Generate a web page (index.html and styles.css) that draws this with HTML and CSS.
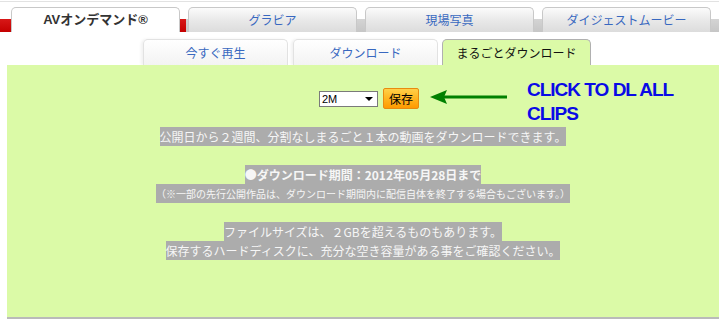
FILE: index.html
```html
<!DOCTYPE html>
<html lang="ja">
<head>
  <meta charset="UTF-8">
  <title>まるごとダウンロード</title>
  <link rel="stylesheet" href="styles.css">
</head>
<body>

<div class="topline"></div>

<div class="maintabs">
  <div class="mtab active">AVオンデマンド®</div>
  <div class="mtab">グラビア</div>
  <div class="mtab">現場写真</div>
  <div class="mtab">ダイジェストムービー</div>
</div>

<div class="subtabs">
  <div class="stab">今すぐ再生</div>
  <div class="stab">ダウンロード</div>
  <div class="stab active">まるごとダウンロード</div>
</div>

<div class="panel">
  <div class="controls">
    <div class="select">
      <span>2M</span>
      <span class="caret"></span>
    </div>
    <button class="save">保存</button>
  </div>

  <div class="note">
    <svg class="arrow" width="80" height="16" viewBox="0 0 80 16">
      <path d="M14 8 H77" stroke="#008000" stroke-width="3"/>
      <path d="M0 8 L17 1 L14 8 L17 15 Z" fill="#008000"/>
    </svg>
    <div class="note-text">CLICK TO DL ALL<br>CLIPS</div>
  </div>

  <div class="info">
    <div class="line"><span>公開日から２週間、分割なしまるごと１本の動画をダウンロードできます。</span></div>
    <div class="line"></div>
    <div class="line"><span class="bold">●ダウンロード期間：2012年05月28日まで</span></div>
    <div class="line"><span class="small">（※一部の先行公開作品は、ダウンロード期間内に配信自体を終了する場合もございます。）</span></div>
    <div class="line"></div>
    <div class="line"><span>ファイルサイズは、２GBを超えるものもあります。</span></div>
    <div class="line"><span>保存するハードディスクに、充分な空き容量がある事をご確認ください。</span></div>
  </div>
</div>

</body>
</html>
```

FILE: styles.css
```css
* {
  box-sizing: border-box;
}
body {
  margin: 0;
  background: #fff;
  font-family: "Noto Sans CJK JP", "DejaVu Sans", sans-serif;
  font-size: 12px;
}
.topline {
  margin-top: 1px;
  height: 1px;
  background: #e2e2e2;
}

/* main tabs */
.maintabs {
  display: flex;
  gap: 8px;
  padding: 5px 0 0 11px;
  height: 30px;
  background:
    linear-gradient(#d81818, #c40000) 0 100% / 186px 13px no-repeat,
    linear-gradient(#d4d4d4, #c6c6c6) 0 100% / 100% 13px no-repeat;
  border-top-left-radius: 8px;
}
.mtab {
  width: 169px;
  height: 25px;
  border: 1px solid #c8c8c8;
  border-bottom: none;
  border-radius: 5px 5px 0 0;
  background: linear-gradient(#fbfbfb, #e9e9e9 50%, #dcdcdc);
  color: #3868c0;
  text-align: center;
  line-height: 23px;
  font-size: 12px;
}
.mtab.active {
  background: #fff;
  color: #333;
  font-weight: bold;
  font-size: 13px;
  font-family: "Liberation Sans", "Noto Sans CJK JP", sans-serif;
}

/* sub tabs */
.subtabs {
  display: flex;
  gap: 5px;
  margin-top: 7px;
  padding-left: 143px;
  height: 26px;
}
.stab {
  width: 145px;
  height: 26px;
  border: 1px solid #e2e2e2;
  border-bottom: none;
  border-radius: 5px 5px 0 0;
  background: linear-gradient(#fff, #f3f3f3);
  box-shadow: -2px 0 3px rgba(0,0,0,0.06);
  color: #3868c0;
  text-align: center;
  line-height: 26px;
}
.stab.active {
  width: 149px;
  margin-left: -1px;
  background: #dbfaa7;
  border-color: #b0b0b0;
  color: #111;
  box-shadow: none;
}

/* panel */
.panel {
  position: relative;
  margin-left: 7px;
  height: 254px;
  background: #dbfaa7;
  border-bottom: 2px solid #bababa;
}
.controls {
  display: flex;
  justify-content: center;
  align-items: center;
  gap: 5px;
  padding: 23px 0 0 12px;
}
.select {
  display: flex;
  justify-content: space-between;
  align-items: center;
  width: 59px;
  height: 16px;
  padding: 0 4px 0 2px;
  background: #fff;
  border: 1px solid #7a7a7a;
  font-family: "Liberation Sans", sans-serif;
  font-size: 11px;
}
.caret {
  width: 0;
  height: 0;
  border-left: 4px solid transparent;
  border-right: 4px solid transparent;
  border-top: 4px solid #000;
}
.save {
  width: 36px;
  height: 21px;
  padding: 0;
  border: 1px solid #e88a10;
  border-radius: 2px;
  background: linear-gradient(#ffd048, #ffb520 50%, #ff9a00);
  color: #000;
  font-family: "Noto Sans CJK JP", sans-serif;
  font-size: 12px;
  line-height: 19px;
}

/* annotation drawn over the panel */
.note {
  position: absolute;
  left: 423px;
  top: 13px;
  display: flex;
  align-items: flex-start;
  gap: 17px;
}
.arrow {
  margin-top: 11px;
}
.note-text {
  color: #0a0ae6;
  font-family: "Liberation Sans Narrow", "Liberation Sans", sans-serif;
  font-weight: bold;
  font-size: 19px;
  line-height: 24px;
  letter-spacing: -1px;
}

.info {
  margin-top: 18px;
  text-align: center;
}
.line {
  height: 19px;
}
.line span {
  display: inline-block;
  height: 19px;
  line-height: 19px;
  background: #acacac;
  color: #f6f6f6;
}
.line .bold {
  font-weight: bold;
}
.line .small {
  font-size: 10px;
}
```
